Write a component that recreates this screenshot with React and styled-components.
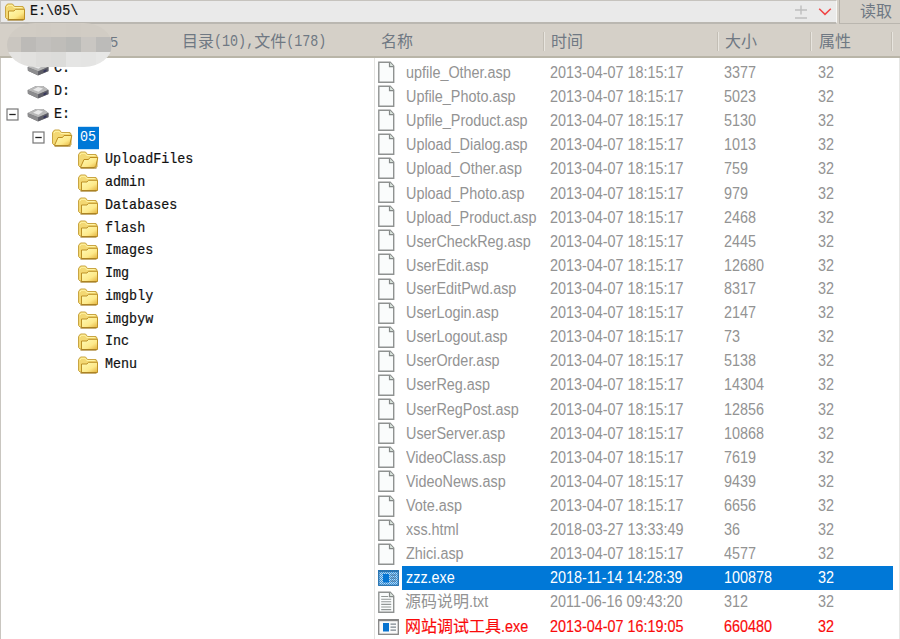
import React from 'react';
import styled, { createGlobalStyle } from 'styled-components';

const Global = createGlobalStyle`
  * { box-sizing: border-box; }
  body { margin: 0; background: #fff; overflow: hidden; }
`;

const Window = styled.div`
  position: relative;
  width: 900px;
  height: 639px;
  overflow: hidden;
  display: flex;
  flex-direction: column;
  font-family: 'Liberation Sans', 'Noto Sans CJK SC', sans-serif;
  font-size: 14.4px;
  white-space: pre;
  color: #939393;
`;

const AddressBar = styled.div`
  display: flex;
  height: 24px;
  background: #d5d0c8;
`;

const Address = styled.div`
  width: 837px;
  height: 24px;
  display: flex;
  align-items: center;
  padding: 0 4px 0 3px;
  background: #eaeaea;
  border-top: 1px solid #c6c3be;
  border-left: 1px solid #c6c3be;
  border-bottom: 2px solid #bab7b1;
  border-right: 1px solid #f8f8f6;
`;

const Mono = styled.span`
  display: inline-block;
  font-family: 'Liberation Mono', 'Noto Sans CJK SC', monospace;
  font-size: 13.4px;
  line-height: 20px;
  color: #111;
  transform: scaleY(1.12);
  -webkit-text-stroke: 0.2px currentColor;
`;

const Path = styled(Mono)`
  flex: 1;
  padding-left: 4px;
`;

const AddressIcons = styled.div`
  display: flex;
  align-items: center;
  gap: 10px;
`;

const ReadButton = styled.div`
  width: 61px;
  padding-left: 20px;
  border-left: 1px solid #b5b1aa;
  border-bottom: 1px solid #bab6af;
  margin-left: 2px;
  overflow: hidden;
  font-size: 16px;
  line-height: 23px;
  color: #6f7883;
`;

const Header = styled.div`
  display: flex;
  height: 34px;
  background: #d5d0c8;
  border-bottom: 2px solid #b9b5a8;
  color: #6f7883;
  font-size: 16px;
  line-height: 36px;
`;

const Summary = styled.div`
  display: flex;
  align-items: center;
  width: 375px;
  height: 35px;
`;

const HostTail = styled.span`
  width: 72px;
  margin-left: 110px;
  font-size: 14.4px;
  line-height: 34px;
`;

const Latin = styled.span`
  display: inline-block;
  font-family: 'Liberation Mono', monospace;
  font-size: 13.4px;
  transform: scaleY(1.22);
`;

const HeadCell = styled.div`
  position: relative;
  width: ${(p) => p.$w}px;
  padding-left: ${(p) => p.$pad}px;
  &::after {
    content: '';
    position: absolute;
    right: 0;
    top: 8px;
    height: 19px;
    width: 2px;
    background: linear-gradient(90deg, #c3beb5 50%, #e8e5df 50%);
  }
`;

const Panels = styled.div`
  display: flex;
  flex: 1;
  min-height: 0;
`;

const Tree = styled.div`
  width: 375px;
  border-left: 1px solid #c9c6c0;
  border-right: 1px solid #e4e4e2;
`;

const TreeRow = styled.div`
  display: flex;
  align-items: center;
  height: 22.75px;
  padding-left: ${(p) => p.$indent}px;
`;

const TreeIcon = styled.span`
  display: flex;
  width: 22px;
  margin-right: ${(p) => p.$gap}px;
`;

const Expander = styled.span`
  display: flex;
  width: 13px;
  margin-right: ${(p) => p.$gap}px;
`;

const SelectedName = styled(Mono)`
  padding: 0 3px 0 2px;
  background: #0078d7;
  color: #fff;
  -webkit-text-stroke: 0;
`;

const Files = styled.div`
  flex: 1;
  padding: 2px 6px 0 2px;
  border-right: 1px solid #e6e6e4;
`;

const FileRow = styled.div`
  display: flex;
  height: 24.12px;
  color: ${(p) => (p.$kind === 'selected' ? '#fff' : p.$kind === 'tool' ? '#fa0a0a' : '#939393')};
  line-height: 24px;
`;

const FileIcon = styled.span`
  width: 25px;
  display: flex;
  align-items: center;
`;

const FileData = styled.div`
  display: grid;
  grid-template-columns: 144px 174px 94px 1fr;
  flex: 1;
  padding-left: 4px;
  background: ${(p) => (p.$kind === 'selected' ? '#0078d7' : 'transparent')};
`;

const Cell = styled.span`
  height: 24px;
  transform: scaleY(1.1);
  transform-origin: 50% 50%;
  -webkit-text-stroke: ${(p) => (p.$strong ? '0.15px' : '0')} currentColor;
`;

const HanName = styled.span`
  font-size: 16px;
  line-height: 22px;
  display: inline-block;
  transform: scaleY(0.93);
  margin-left: -1px;
`;

const RedactedHost = styled.div`
  position: absolute;
  left: 7px;
  top: 23px;
  width: 105px;
  height: 44px;
  border-radius: 28px / 22px;
  overflow: hidden;
  display: grid;
  grid-template-columns: 14px repeat(6, 15px) 1fr;
  grid-template-rows: 14px 15px 15px;
`;

const Tile = styled.span`
  background: ${(p) => p.$c};
`;

const TILES = [
  '#d1ccc4', '#d1ccc4', '#d0cbc3', '#d1ccc4', '#d0cbc3', '#d1ccc4', '#d1ccc4', '#d1ccc4',
  '#cac6c0', '#bcbab7', '#c2c0bd', '#bfbdb9', '#b9b9b6', '#c9c6c2', '#bcbbb9', '#cac8c4',
  '#e4e3e1', '#e2e1df', '#dedddb', '#dcdcda', '#e5e5e4', '#e4e4e3', '#e7e7e6', '#e4e4e2',
];

const Folder = ({ open }) => (
  <svg width="22" height="20" viewBox="0 0 22 20">
    <defs>
      <linearGradient id="folderFront" x1="0" y1="0" x2="1" y2="1">
        <stop offset="0" stopColor="#fffbb5" />
        <stop offset=".6" stopColor="#fde98a" />
        <stop offset="1" stopColor="#e3b23c" />
      </linearGradient>
    </defs>
    <path d="M1.5 15.5V4.5L3.5 2h5l2 2.5h8.5l1 1.5v11H3z" fill="#f3d873" stroke="#c9a543" />
    <path d="M3 5.2L4.2 3.3h4l1.6 2.2h8" fill="none" stroke="#fff4a5" />
    {open ? (
      <path d="M3.5 17.3L7 9.5h4.5l1.5-2h7.8L19 15.7l-2 2H4z" fill="url(#folderFront)" stroke="#bd8e20" />
    ) : (
      <path d="M4.5 17.5V9H10l1.5-1.7h9v10.2z" fill="url(#folderFront)" stroke="#bd9127" />
    )}
    <path d="M3.5 18h16" stroke="#a17a20" strokeWidth="1.2" />
  </svg>
);

const Drive = () => (
  <svg width="22" height="14" viewBox="0 0 22 14">
    <path d="M.5 5.2L9 1h7l5.5 4v4.2L11 13.5.8 8.7z" fill="#747477" />
    <path d="M.5 5.1L9 1h7l5.5 3.8L11 9.2z" fill="#b8b8b8" />
    <path d="M6 4.8L11 2l5 1.5-4.5 3.3z" fill="#e9e9e9" />
    <path d="M11 9.2v4.1L1 8.7V5.4z" fill="#8d8d8f" />
    <path d="M11.2 9.4l10.2-4.3v3.8l-10.2 4.4z" fill="#5e5e66" />
    <path d="M16.5 8.4l3-1.2v2l-3 1.2z" fill="#35355c" />
  </svg>
);

const Minus = () => (
  <svg width="13" height="13" viewBox="0 0 13 13">
    <rect x="1" y="1" width="11" height="11" fill="#fff" stroke="#777" strokeWidth="1.2" />
    <path d="M3.3 6.5h6.4" stroke="#222" strokeWidth="1.3" />
  </svg>
);

const Sheet = ({ lines }) => (
  <svg width="20" height="23" viewBox="0 0 20 23">
    <path d="M1.8 1.3h11.4l3.5 3.8v16.2H1.8z" fill="#fafcfc" stroke="#8f9291" strokeWidth="1.4" />
    <path d="M12.5 1.3v4.3h4.2" fill="#dce7df" stroke="#858988" strokeWidth="1.2" />
    {lines && <path d="M4.2 5.5h7M4.2 8.2h10M4.2 10.8h10M4.2 13.4h10M4.2 16h10M4.2 18.6h10" stroke="#929796" strokeWidth="1.1" />}
  </svg>
);

const Program = ({ selected }) => (
  <svg width="23" height="18" viewBox="0 0 23 18">
    <defs>
      <pattern id="dither" width="2" height="2" patternUnits="userSpaceOnUse">
        <path d="M0 0h1v1H0zM1 1h1v1H1z" fill="#0078d7" />
      </pattern>
    </defs>
    <rect x="1.7" y="1.7" width="19.6" height="14.6" fill={selected ? '#b8d7f0' : '#fafafa'} stroke={selected ? '#3f719b' : '#858585'} strokeWidth="1.3" />
    <path d="M1.5 2.2h20" stroke={selected ? '#3f719b' : '#858585'} strokeWidth="2" />
    <rect x="6" y="5" width="6" height="8.5" fill="#0873cf" />
    <path d="M13.5 6.2h5.5M13.5 9.2h5.5M13.5 12.2h5.5" stroke="#7d8790" strokeWidth="1.2" />
    {selected && <rect x="1" y="1" width="21" height="16" fill="url(#dither)" opacity=".7" />}
  </svg>
);

const PlusMinus = () => (
  <svg width="14" height="16" viewBox="0 0 14 16">
    <path d="M7 1.5v9M1 6h12M1 14h12" fill="none" stroke="#bebebe" strokeWidth="1.4" />
  </svg>
);

const Chevron = () => (
  <svg width="14" height="10" viewBox="0 0 14 10">
    <path d="M1.2 1.8L7 7.4l5.8-5.6" fill="none" stroke="#f04747" strokeWidth="1.5" />
  </svg>
);

const FOLDERS = ['UploadFiles', 'admin', 'Databases', 'flash', 'Images', 'Img', 'imgbly', 'imgbyw', 'Inc', 'Menu'];

const D = '2013-04-07 18:15:17';
const FILES = [
  ['upfile_Other.asp', D, '3377'],
  ['Upfile_Photo.asp', D, '5023'],
  ['Upfile_Product.asp', D, '5130'],
  ['Upload_Dialog.asp', D, '1013'],
  ['Upload_Other.asp', D, '759'],
  ['Upload_Photo.asp', D, '979'],
  ['Upload_Product.asp', D, '2468'],
  ['UserCheckReg.asp', D, '2445'],
  ['UserEdit.asp', D, '12680'],
  ['UserEditPwd.asp', D, '8317'],
  ['UserLogin.asp', D, '2147'],
  ['UserLogout.asp', D, '73'],
  ['UserOrder.asp', D, '5138'],
  ['UserReg.asp', D, '14304'],
  ['UserRegPost.asp', D, '12856'],
  ['UserServer.asp', D, '10868'],
  ['VideoClass.asp', D, '7619'],
  ['VideoNews.asp', D, '9439'],
  ['Vote.asp', D, '6656'],
  ['xss.html', '2018-03-27 13:33:49', '36'],
  ['Zhici.asp', D, '4577'],
  ['zzz.exe', '2018-11-14 14:28:39', '100878', 'selected'],
  ['源码说明.txt', '2011-06-16 09:43:20', '312', 'text'],
  ['网站调试工具.exe', '2013-04-07 16:19:05', '660480', 'tool'],
];

const iconFor = (kind) => {
  if (kind === 'selected') return <Program selected />;
  if (kind === 'tool') return <Program />;
  return <Sheet lines={kind === 'text'} />;
};

const FileName = ({ name }) => {
  const [, han, rest] = name.match(/^([\u4e00-\u9fff]*)(.*)$/);
  return (
    <>
      {han && <HanName>{han}</HanName>}
      {rest}
    </>
  );
};

export default function App() {
  return (
    <Window>
      <Global />
      <AddressBar>
        <Address>
          <Folder />
          <Path>E:\05\</Path>
          <AddressIcons>
            <PlusMinus />
            <Chevron />
          </AddressIcons>
        </Address>
        <ReadButton>读取</ReadButton>
      </AddressBar>
      <Header>
        <Summary>
          <HostTail>5</HostTail>
          目录<Latin>(10),</Latin>文件<Latin>(178)</Latin>
        </Summary>
        <HeadCell $w={170} $pad={6}>名称</HeadCell>
        <HeadCell $w={174} $pad={6}>时间</HeadCell>
        <HeadCell $w={93} $pad={6}>大小</HeadCell>
        <HeadCell $w={81} $pad={7}>属性</HeadCell>
      </Header>
      <Panels>
        <Tree>
          {['C:', 'D:'].map((name) => (
            <TreeRow key={name} $indent={26}>
              <TreeIcon $gap={5}><Drive /></TreeIcon>
              <Mono>{name}</Mono>
            </TreeRow>
          ))}
          <TreeRow $indent={5}>
            <Expander $gap={8}><Minus /></Expander>
            <TreeIcon $gap={5}><Drive /></TreeIcon>
            <Mono>E:</Mono>
          </TreeRow>
          <TreeRow $indent={31}>
            <Expander $gap={6}><Minus /></Expander>
            <TreeIcon $gap={5}><Folder open /></TreeIcon>
            <SelectedName>05</SelectedName>
          </TreeRow>
          {FOLDERS.map((name, i) => (
            <TreeRow key={name} $indent={76}>
              <TreeIcon $gap={6}><Folder open={i === 0} /></TreeIcon>
              <Mono>{name}</Mono>
            </TreeRow>
          ))}
        </Tree>
        <Files>
          {FILES.map(([name, time, size, kind]) => (
            <FileRow key={name} $kind={kind}>
              <FileIcon>{iconFor(kind)}</FileIcon>
              <FileData $kind={kind}>
                <Cell $strong={kind === 'tool'}><FileName name={name} /></Cell>
                <Cell $strong={kind === 'tool'}>{time}</Cell>
                <Cell $strong={kind === 'tool'}>{size}</Cell>
                <Cell $strong={kind === 'tool'}>32</Cell>
              </FileData>
            </FileRow>
          ))}
        </Files>
      </Panels>
      <RedactedHost>
        {TILES.map((c, i) => <Tile key={i} $c={c} />)}
      </RedactedHost>
    </Window>
  );
}
